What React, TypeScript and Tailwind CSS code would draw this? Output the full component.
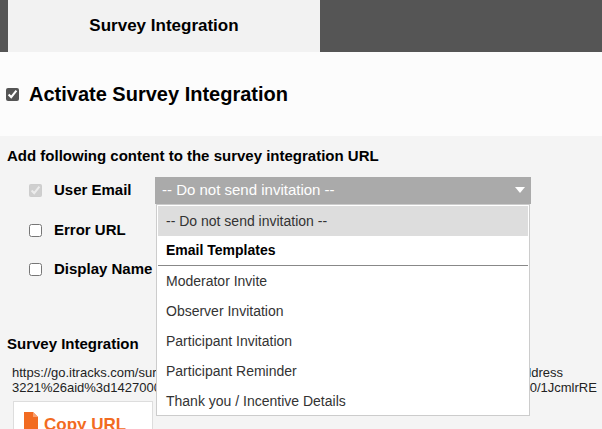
import React from "react";

export default function App() {
  const items = ["Moderator Invite", "Observer Invitation", "Participant Invitation", "Participant Reminder", "Thank you / Incentive Details"];
  return (
    <div className="w-[602px] h-[429px] overflow-hidden bg-[#f4f4f4] font-[Liberation_Sans,Arial,sans-serif] text-black relative">
      <div className="h-[52px] bg-[#555555] pl-[8px] flex">
        <div className="w-[312px] h-full bg-[#f2f2f2] flex items-center justify-center text-[17px] font-bold">Survey Integration</div>
      </div>
      <div className="h-[84px] bg-[#fcfcfc] flex items-center pl-[6px] gap-[10px]">
        <input type="checkbox" defaultChecked className="w-[13px] h-[13px] accent-[#555]" />
        <span className="text-[20px] font-bold">Activate Survey Integration</span>
      </div>
      <div className="pl-[7px] pt-[9px] text-[15px] font-bold">Add following content to the survey integration URL</div>
      <div className="pl-[29px] mt-[9px] flex flex-col">
        <div className="flex items-center h-[27px]">
          <input type="checkbox" defaultChecked disabled className="w-[13px] h-[13px]" />
          <span className="ml-[12px] w-[101px] text-[15px] font-bold">User Email</span>
          <div className="w-[376px] h-[27px] bg-[#aaaaaa] text-white font-[Liberation_Sans,Arial,sans-serif] text-[15px] flex items-center pl-[7px] pr-[6px]">
            <span className="flex-1">-- Do not send invitation --</span>
            <svg width="10" height="6" viewBox="0 0 10 6"><path d="M0 0h10L5 6z" fill="white" /></svg>
          </div>
        </div>
        <div className="flex items-center h-[15px] mt-[19px]">
          <input type="checkbox" className="w-[13px] h-[13px] accent-[#555]" />
          <span className="ml-[12px] text-[15px] font-bold">Error URL</span>
        </div>
        <div className="flex items-center h-[15px] mt-[24px]">
          <input type="checkbox" className="w-[13px] h-[13px] accent-[#555]" />
          <span className="ml-[12px] text-[15px] font-bold">Display Name</span>
        </div>
      </div>
      <div className="pl-[7px] mt-[56px] text-[15px] font-bold">Survey Integration</div>
      <div className="pl-[12px] mt-[10px] text-[13px] leading-[15px] whitespace-nowrap text-[#222]">
        <div>https://go.itracks.com/survey/redirect?url=abcdefghijklmnopqrstuvwxyzabcdefghijkemailAddress</div>
        <div>3221%26aid%3d14270000000000000000000000000000000000000000000000000000000/1JcmlrRE</div>
      </div>
      <div className="ml-[13px] mt-[6px] w-[140px] h-[40px] bg-white border border-[#ddd] flex items-start pt-[10px] pl-[10px] gap-[6px] text-[#f26b21] text-[17px] font-bold">
        <svg width="14" height="18" viewBox="0 0 14 18"><path d="M0 0h9l5 5v13H0z" fill="#f26b21" /><path d="M9 0v5h5" fill="#f9a070" /></svg>
        Copy URL
      </div>

      <div className="absolute left-[156px] top-[204px] w-[374px] h-[212px] bg-white border border-[#cccccc] font-['Open_Sans',sans-serif] text-[14px] text-[#333]">
        <div className="mx-[1px] mt-[1px] h-[30px] bg-[#dddddd] flex items-center pl-[8px]">-- Do not send invitation --</div>
        <div className="mx-[1px] h-[30px] flex items-center pl-[8px] font-bold text-black border-b border-[#888]">Email Templates</div>
        {items.map((t) => (
          <div key={t} className="h-[30px] flex items-center pl-[9px]">{t}</div>
        ))}
      </div>
    </div>
  );
}
